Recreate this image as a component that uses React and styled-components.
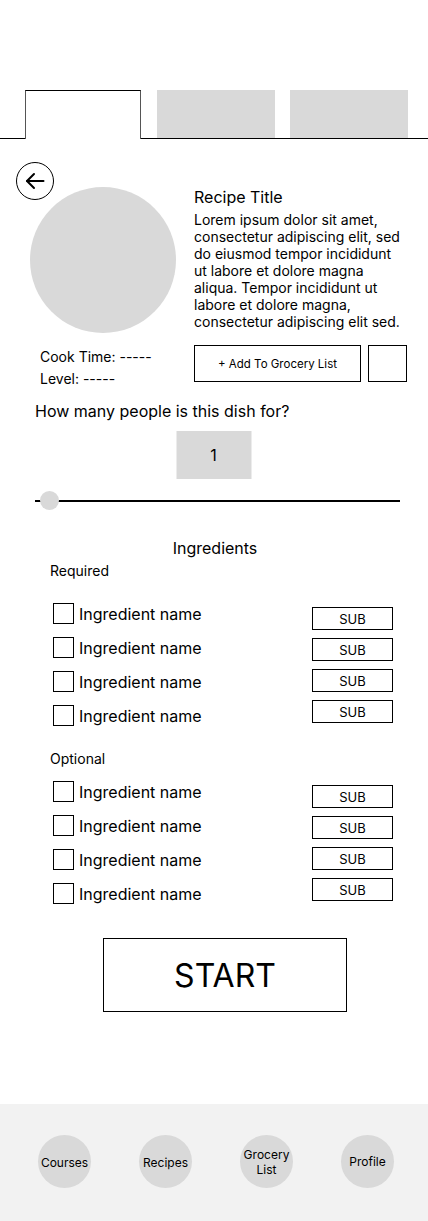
import React from "react";
import styled, { createGlobalStyle } from "styled-components";

const Global = createGlobalStyle`
  html, body { margin: 0; padding: 0; background: #fff; }
  body { font-family: Inter, "Noto Sans", sans-serif; color: #000; }
  * { box-sizing: border-box; }
`;

const Page = styled.div`
  width: 428px;
  min-height: 1221px;
  display: flex;
  flex-direction: column;
  background: #fff;
`;

const TabBar = styled.div`
  margin-top: 90px;
  height: 49px;
  display: flex;
  align-items: flex-end;
  gap: 16px;
  padding-left: 25px;
  border-bottom: 1px solid #000;
`;

const Tab = styled.div`
  width: ${(p) => (p.$active ? 116 : 118)}px;
  height: 48px;
  background: ${(p) => (p.$active ? "#fff" : "#d9d9d9")};
  ${(p) =>
    p.$active &&
    `
    border-top: 1px solid #000;
    border-left: 1px solid #555;
    border-right: 1px solid #555;
    height: 49px;
    margin-bottom: -1px;
  `}
  &:nth-child(3) { margin-left: -1px; }
`;

const Hero = styled.section`
  position: relative;
  padding: 48px 0 0 30px;
  display: grid;
  grid-template-columns: 146px 213px;
  column-gap: 18px;
`;

const BackButton = styled.button`
  position: absolute;
  top: 23px;
  left: 16px;
  width: 38px;
  height: 38px;
  border-radius: 50%;
  border: 1px solid #000;
  background: #fff;
  padding: 0;
  display: flex;
  align-items: center;
  justify-content: center;
  cursor: pointer;
`;

const LeftCol = styled.div`
  display: flex;
  flex-direction: column;
`;

const Photo = styled.div`
  width: 146px;
  height: 146px;
  border-radius: 50%;
  background: #d9d9d9;
`;

const Meta = styled.div`
  margin-top: 13px;
  padding-left: 10px;
  font-size: 14px;
  line-height: 22px;
`;

const RightCol = styled.div`
  display: flex;
  flex-direction: column;
`;

const Title = styled.h1`
  margin: 0;
  font-size: 16px;
  font-weight: 400;
  line-height: 20px;
`;

const Desc = styled.p`
  margin: 4px 0 0;
  font-size: 14px;
  line-height: 17px;
  width: 210px;
`;

const Actions = styled.div`
  margin-top: 15px;
  display: flex;
  gap: 7px;
`;

const OutlineButton = styled.button`
  width: ${(p) => p.$w}px;
  height: 37px;
  border: 1px solid #000;
  background: #fff;
  font-family: inherit;
  font-size: 11.5px;
  color: #000;
  padding: 0;
  cursor: pointer;
`;

const Question = styled.p`
  margin: 11px 0 0 35px;
  font-size: 16px;
  line-height: 20px;
`;

const Counter = styled.div`
  margin: 10px auto 0;
  width: 75px;
  height: 48px;
  background: #d9d9d9;
  display: flex;
  align-items: center;
  justify-content: center;
  font-size: 16px;
  transform: translateX(-0.5px);
`;

const Slider = styled.div`
  position: relative;
  margin: 12px 0 0 35px;
  width: 365px;
  height: 19px;
  display: flex;
  align-items: center;
`;

const Track = styled.div`
  width: 100%;
  height: 2px;
  background: #000;
`;

const Thumb = styled.div`
  position: absolute;
  left: 5px;
  top: 0;
  width: 19px;
  height: 19px;
  border-radius: 50%;
  background: #d9d9d9;
`;

const SectionTitle = styled.h2`
  margin: 28px 0 0;
  font-size: 16px;
  font-weight: 400;
  line-height: 20px;
  text-align: center;
  padding-left: 2px;
`;

const GroupLabel = styled.div`
  margin: ${(p) => p.$top}px 0 0 50px;
  font-size: 14px;
  line-height: 18px;
`;

const Group = styled.div`
  margin: ${(p) => p.$top}px 0 0 53px;
  display: flex;
  justify-content: space-between;
  width: 340px;
`;

const CheckList = styled.div`
  display: flex;
  flex-direction: column;
  gap: 13px;
`;

const CheckRow = styled.label`
  display: flex;
  align-items: center;
  gap: 5px;
  height: 21px;
  font-size: 16px;
`;

const Box = styled.span`
  width: 21px;
  height: 21px;
  border: 1px solid #000;
  background: #fff;
`;

const SubList = styled.div`
  padding-top: 4px;
  display: flex;
  flex-direction: column;
  gap: 8px;
`;

const SubButton = styled.button`
  width: 81px;
  height: 23px;
  border: 1px solid #000;
  background: #fff;
  font-family: inherit;
  font-size: 13px;
  color: #000;
  padding: 0;
`;

const StartButton = styled.button`
  margin: 34px 0 0 103px;
  width: 244px;
  height: 74px;
  border: 1px solid #000;
  background: #fff;
  font-family: inherit;
  font-size: 32px;
  color: #000;
  cursor: pointer;
`;

const NavBar = styled.nav`
  margin-top: auto;
  height: 117px;
  background: #f2f2f2;
  display: flex;
  gap: 48px;
  padding: 31px 0 0 38px;
`;

const NavItem = styled.div`
  width: 53px;
  height: 53px;
  border-radius: 50%;
  background: #d9d9d9;
  display: flex;
  align-items: center;
  justify-content: center;
  text-align: center;
  font-size: 12px;
  line-height: 15px;
  padding-top: ${(p) => p.$dy || 0}px;
`;

const ingredients = ["Ingredient name", "Ingredient name", "Ingredient name", "Ingredient name"];

function IngredientGroup({ top }) {
  return (
    <Group $top={top}>
      <CheckList>
        {ingredients.map((name, i) => (
          <CheckRow key={i}>
            <Box />
            {name}
          </CheckRow>
        ))}
      </CheckList>
      <SubList>
        {ingredients.map((_, i) => (
          <SubButton key={i}>SUB</SubButton>
        ))}
      </SubList>
    </Group>
  );
}

export default function App() {
  return (
    <Page>
      <Global />
      <TabBar>
        <Tab $active />
        <Tab />
        <Tab />
      </TabBar>

      <Hero>
        <BackButton aria-label="Back">
          <svg width="24" height="24" viewBox="0 0 24 24" fill="none" stroke="#000" strokeWidth="2" strokeLinecap="round" strokeLinejoin="round">
            <path d="M20.5 12H4" />
            <path d="M11 5l-7 7 7 7" />
          </svg>
        </BackButton>
        <LeftCol>
          <Photo />
          <Meta>
            <div>Cook Time: -----</div>
            <div>Level: -----</div>
          </Meta>
        </LeftCol>
        <RightCol>
          <Title>Recipe Title</Title>
          <Desc>
            Lorem ipsum dolor sit amet, consectetur adipiscing elit, sed do eiusmod tempor incididunt ut labore et dolore magna aliqua. Tempor incididunt ut labore et dolore magna, consectetur adipiscing elit sed.
          </Desc>
          <Actions>
            <OutlineButton $w={167}>+ Add To Grocery List</OutlineButton>
            <OutlineButton $w={39} aria-label="More" />
          </Actions>
        </RightCol>
      </Hero>

      <Question>How many people is this dish for?</Question>
      <Counter>1</Counter>
      <Slider>
        <Track />
        <Thumb />
      </Slider>

      <SectionTitle>Ingredients</SectionTitle>
      <GroupLabel $top={4}>Required</GroupLabel>
      <IngredientGroup top={23} />
      <GroupLabel $top={24}>Optional</GroupLabel>
      <IngredientGroup top={13} />

      <StartButton>START</StartButton>

      <NavBar>
        <NavItem $dy={2}>Courses</NavItem>
        <NavItem $dy={2}>Recipes</NavItem>
        <NavItem>Grocery<br />List</NavItem>
        <NavItem>Profile</NavItem>
      </NavBar>
    </Page>
  );
}
